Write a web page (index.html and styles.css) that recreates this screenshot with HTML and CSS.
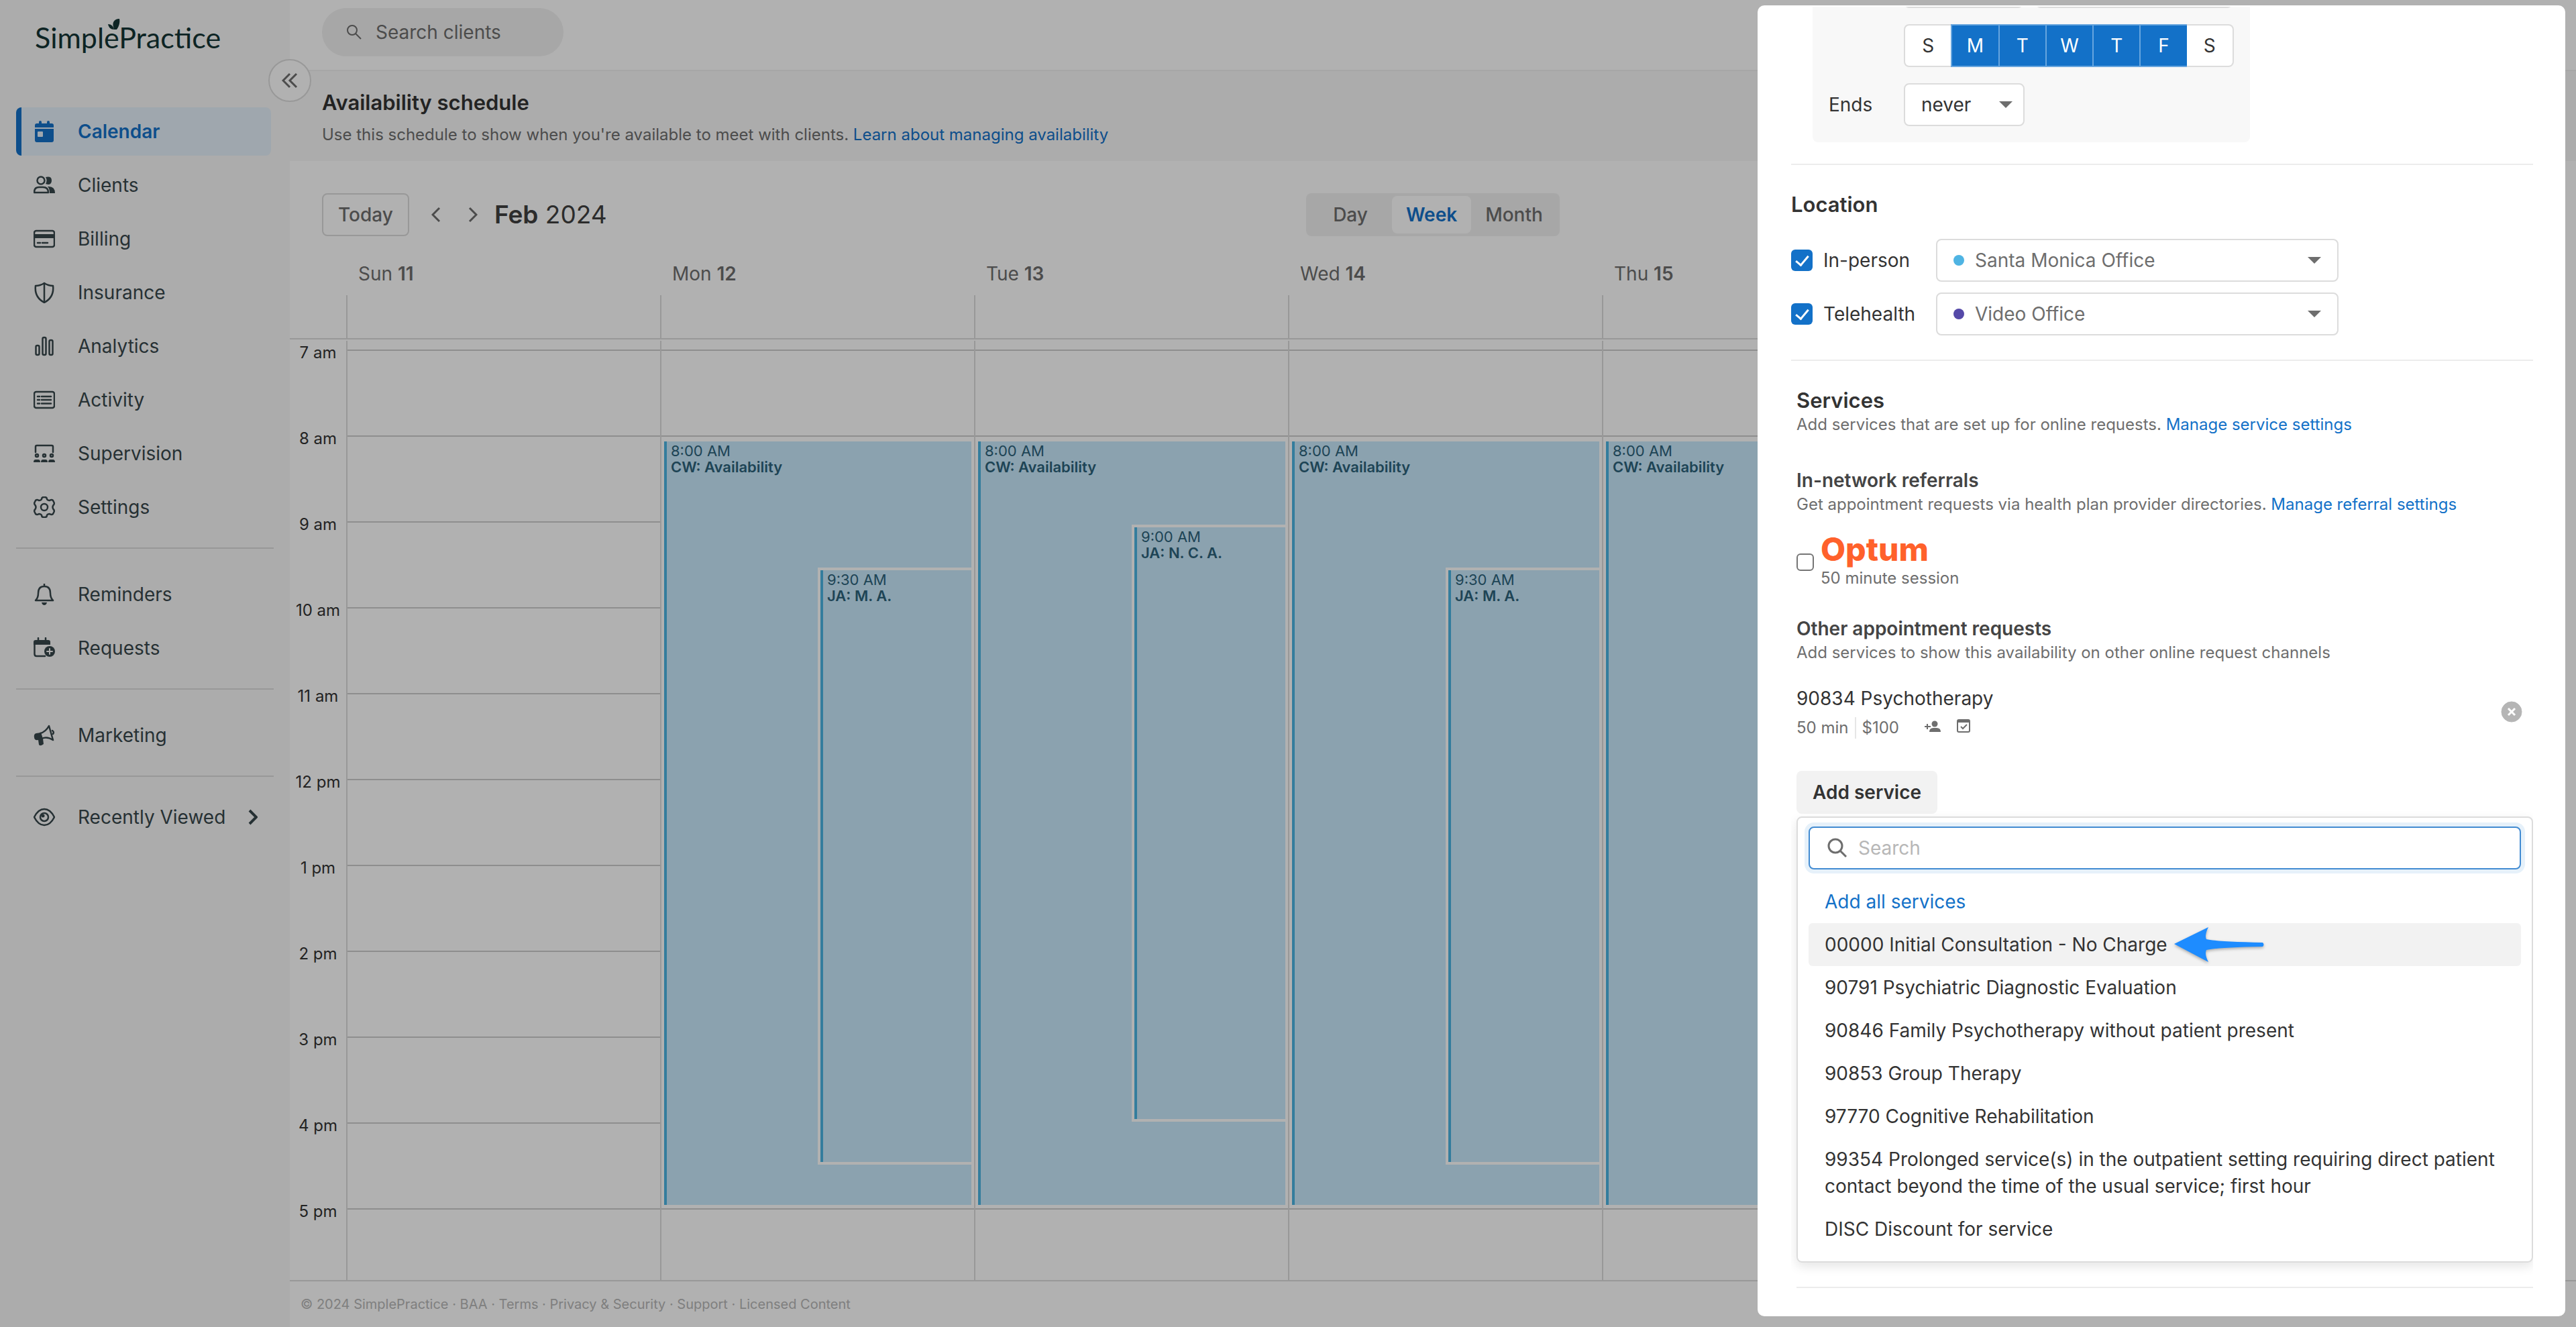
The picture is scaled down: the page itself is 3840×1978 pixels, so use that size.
FILE: index.html
```html
<!DOCTYPE html>
<html lang="en">
  <head>
    <meta charset="UTF-8" />
    <meta name="viewport" content="width=device-width, initial-scale=1.0" />
    <title>Availability schedule</title>
    <link rel="stylesheet" href="styles.css">
  </head>
  <body>
    <div class="app">
      <aside class="sidebar">
        <a class="logo" href="#">
          <span>SimplePractice</span>
          <svg class="logo-leaf" viewBox="0 0 18 18"><path d="M8 12C6 6 9 0 17 0c1 4 0 11-4 16H9z" /><path d="M0 8c5 0 8 3 9 8-5 0-8-3-9-8z" /></svg>
        </a>
        <button class="collapse" aria-label="Collapse menu">
          <svg viewBox="0 0 24 24"><path d="M12 2 2 12l10 10M22 2 12 12l10 10" /></svg>
        </button>

        <nav>
          <div class="nav-group">
            <a class="nav-item active" href="#">
              <svg class="icon solid" viewBox="0 0 32 32"><path d="M2 10V7q0-3 3-3h3V2q0-2 2-2t2 2v2h8V2q0-2 2-2t2 2v2h3q3 0 3 3v3zM2 12h28v17q0 3-3 3H5q-3 0-3-3zm5 4q-1 0-1 1v6q0 1 1 1h6q1 0 1-1v-6q0-1-1-1z" fill-rule="evenodd" /></svg>
              Calendar
            </a>
            <a class="nav-item" href="#">
              <svg class="icon" viewBox="0 0 32 32"><circle cx="11" cy="9" r="5.5" /><path d="M1 27q0-8 7-8h6q8 0 8 8z" /><path class="fill" d="M18 4q9-2 9 5 0 5-4 6-3 0-5-1 3-5 0-10zM21 18q11-1 11 10h-8q0-7-3-10z" /></svg>
              Clients
            </a>
            <a class="nav-item" href="#">
              <svg class="icon" viewBox="0 0 32 32"><rect x="1" y="4" width="30" height="24" rx="3" /><path class="fill" d="M1 9h30v6H1z" /><path d="M6 22h4M13 22h8" /></svg>
              Billing
            </a>
            <a class="nav-item" href="#">
              <svg class="icon" viewBox="0 0 32 32"><path d="M16 2q6 4 13 4 2 17-13 25Q1 23 3 6q7 0 13-4zM16 2v29" /></svg>
              Insurance
            </a>
            <a class="nav-item" href="#">
              <svg class="icon" viewBox="0 0 32 32"><rect x="3.5" y="15" width="5" height="14" rx="2" /><rect x="13.5" y="3" width="5" height="26" rx="2" /><rect x="23.5" y="7" width="5" height="22" rx="2" /></svg>
              Analytics
            </a>
            <a class="nav-item" href="#">
              <svg class="icon" viewBox="0 0 32 32"><rect x="1" y="4" width="30" height="24" rx="3" /><path d="M6 11h3M6 16h3M6 21.500h3M12 11h14M12 16h14M12 21.500h14" /></svg>
              Activity
            </a>
            <a class="nav-item" href="#">
              <svg class="icon" viewBox="0 0 32 32"><path d="M3 14V6q0-2 2-2h22q2 0 2 2v8" /><circle cx="5" cy="19" r="2" /><circle cx="16" cy="19" r="2" /><circle cx="27" cy="19" r="2" /><path class="fill" d="M0 29q0-4 3-4h4q3 0 3 4zM11 29q0-4 3-4h4q3 0 3 4zM22 29q0-4 3-4h4q3 0 3 4z" /></svg>
              Supervision
            </a>
            <a class="nav-item" href="#">
              <svg class="icon" viewBox="0 0 32 32"><circle cx="16" cy="16" r="5" /><path d="M12 4q0-3 3-3h2q3 0 3 3 1 2 4 2 3-2 5 0l1.500 3q1 2-1 4-2 3 0 6 2 2 1 4L29 26q-2 2-5 0-3 0-4 2 0 3-3 3h-2q-3 0-3-3-1-2-4-2-3 2-5 0l-1.500-3q-1-2 1-4 2-3 0-6-2-2-1-4L3 6q2-2 5 0 3 0 4-2z" /></svg>
              Settings
            </a>
          </div>
          <div class="nav-group">
            <a class="nav-item" href="#">
              <svg class="icon" viewBox="0 0 32 32"><path d="M3 25q4-4 4-11 0-10 9-10t9 10q0 7 4 11zM16 0v4" /><path class="fill" d="M12 28h8q-1 4-4 4t-4-4z" /></svg>
              Reminders
            </a>
            <a class="nav-item" href="#">
              <svg class="icon" viewBox="0 0 32 32"><path d="M7 1v5M18 1v5M1.500 8v17q0 3 3 3H17" /><path class="fill" d="M0 11V7q0-3 3-3h19q3 0 3 3v4z" /><circle class="fill" cx="24" cy="21" r="8" /><path class="cut" d="M24 17v8M20 21h8" /></svg>
              Requests
            </a>
          </div>
          <div class="nav-group">
            <a class="nav-item" href="#">
              <svg class="icon" viewBox="0 0 32 32"><path d="M10 13q8-2 13-11l6 21q-9-6-17-2zM28 9q3 2 1 5" /><path class="fill" d="M4 13l7-1 3 9 1 8q-5 4-7 1l-1-7Q1 24 1 19q-1-5 3-6z" /></svg>
              Marketing
            </a>
          </div>
          <div class="nav-group last">
            <a class="nav-item" href="#">
              <svg class="icon" viewBox="0 0 32 32"><path d="M1 16Q7 4 16 4t15 12q-6 12-15 12T1 16z" /><circle cx="16" cy="16" r="6" /><circle class="fill" cx="14" cy="14" r="2.500" /></svg>
              Recently Viewed
              <svg class="chevron" viewBox="0 0 14 24"><path d="M2 2l10 10L2 22" /></svg>
            </a>
          </div>
        </nav>
      </aside>

      <main class="main">
        <header class="topbar">
          <label class="client-search">
            <svg viewBox="0 0 24 24"><circle cx="9" cy="9" r="7" /><path d="m14 14 8 8" /></svg>
            <input type="text" placeholder="Search clients" aria-label="Search clients" />
          </label>
        </header>

        <section class="intro">
          <h1>Availability schedule</h1>
          <p>Use this schedule to show when you're available to meet with clients. <a href="#">Learn about managing availability</a></p>
        </section>

        <div class="toolbar">
          <div class="period">
            <button class="today">Today</button>
            <button class="step" aria-label="Previous week"><svg viewBox="0 0 14 24"><path d="M12 2 2 12l10 10" /></svg></button>
            <button class="step" aria-label="Next week"><svg viewBox="0 0 14 24"><path d="M2 2l10 10L2 22" /></svg></button>
            <h2><b>Feb</b> 2024</h2>
          </div>
          <div class="view-switch">
            <button>Day</button>
            <button class="active">Week</button>
            <button>Month</button>
          </div>
        </div>

        <div class="calendar">
          <div class="day-names">
            <div>Sun <b>11</b></div>
            <div>Mon <b>12</b></div>
            <div>Tue <b>13</b></div>
            <div>Wed <b>14</b></div>
            <div>Thu <b>15</b></div>
            <div></div>
            <div></div>
          </div>
          <div class="week">
            <div class="hours">
              <span>7 am</span>
              <span>8 am</span>
              <span>9 am</span>
              <span>10 am</span>
              <span>11 am</span>
              <span>12 pm</span>
              <span>1 pm</span>
              <span>2 pm</span>
              <span>3 pm</span>
              <span>4 pm</span>
              <span>5 pm</span>
            </div>
            <div class="day"></div>
            <div class="day">
              <div class="event all">8:00 AM<b>CW: Availability</b></div>
              <div class="event half-nine">9:30 AM<b>JA: M. A.</b></div>
            </div>
            <div class="day">
              <div class="event all">8:00 AM<b>CW: Availability</b></div>
              <div class="event nine">9:00 AM<b>JA: N. C. A.</b></div>
            </div>
            <div class="day">
              <div class="event all">8:00 AM<b>CW: Availability</b></div>
              <div class="event half-nine">9:30 AM<b>JA: M. A.</b></div>
            </div>
            <div class="day">
              <div class="event all">8:00 AM<b>CW: Availability</b></div>
            </div>
            <div class="day"></div>
            <div class="day"></div>
          </div>
        </div>

        <footer class="footer">© 2024 SimplePractice · <a href="#">BAA</a> · <a href="#">Terms</a> · <a href="#">Privacy &amp; Security</a> · <a href="#">Support</a> · <a href="#">Licensed Content</a></footer>
      </main>
    </div>

    <div class="overlay"></div>

    <div class="drawer" role="dialog" aria-label="Edit availability">
      <div class="drawer-body">
        <div class="repeat">
          <div class="repeat-every">
            <select class="every-count" aria-label="Repeat every"></select>
            <select class="every-unit" aria-label="Repeat unit"></select>
          </div>
          <div class="weekdays">
            <button>S</button>
            <button class="on">M</button>
            <button class="on">T</button>
            <button class="on">W</button>
            <button class="on">T</button>
            <button class="on">F</button>
            <button>S</button>
          </div>
          <div class="ends">
            <label for="ends">Ends</label>
            <span class="select-box never">
              <select id="ends"><option>never</option></select>
            </span>
          </div>
        </div>

        <section class="location">
          <h3>Location</h3>
          <div class="location-row">
            <input class="check" type="checkbox" id="in-person" checked />
            <label for="in-person">In-person</label>
            <span class="select-box office">
              <select aria-label="In-person office"><option>Santa Monica Office</option></select>
            </span>
          </div>
          <div class="location-row">
            <input class="check" type="checkbox" id="telehealth" checked />
            <label for="telehealth">Telehealth</label>
            <span class="select-box office video">
              <select aria-label="Telehealth office"><option>Video Office</option></select>
            </span>
          </div>
        </section>

        <section class="services">
          <h3>Services</h3>
          <p>Add services that are set up for online requests. <a href="#">Manage service settings</a></p>

          <h4>In-network referrals</h4>
          <p>Get appointment requests via health plan provider directories. <a href="#">Manage referral settings</a></p>
          <div class="referral">
            <input class="check small" type="checkbox" id="optum" />
            <label for="optum"><span class="optum">Optum</span>50 minute session</label>
          </div>

          <h4>Other appointment requests</h4>
          <p>Add services to show this availability on other online request channels</p>

          <div class="service">
            <div>
              <div class="service-name">90834 Psychotherapy</div>
              <div class="service-meta">
                <span>50 min</span>
                <span class="price">$100</span>
                <svg class="person" viewBox="0 0 24 18"><path d="M3 5h2v3h4v2H5v3H3v-3H0V8h3z" /><circle cx="15" cy="5" r="4.500" /><path d="M7 17q0-6 6-6h5q6 0 6 6z" /></svg>
                <svg class="booked" viewBox="0 0 20 20"><rect x="1" y="1" width="18" height="18" rx="2" /><path d="M1 3h18" stroke-width="4" /><path d="m6 11 3 3 6-6" /></svg>
              </div>
            </div>
            <button class="remove" aria-label="Remove service">
              <svg viewBox="0 0 32 32"><circle cx="16" cy="16" r="15" /><path d="m11 11 10 10M21 11 11 21" /></svg>
            </button>
          </div>

          <button class="add-service">Add service</button>
          <div class="service-menu">
            <label class="menu-search">
              <svg viewBox="0 0 30 30"><circle cx="12" cy="12" r="10" /><path d="m19 19 9 9" /></svg>
              <input type="text" placeholder="Search" aria-label="Search services" />
            </label>
            <button class="option add-all">Add all services</button>
            <button class="option hover">00000 Initial Consultation - No Charge
              <svg class="pointer" viewBox="0 0 134 54"><path d="M0 26 51 1q-6 12-3 18 18 4 84 5 3 3 0 6-66 1-84 5-3 6 3 18z" /></svg>
            </button>
            <button class="option">90791 Psychiatric Diagnostic Evaluation</button>
            <button class="option">90846 Family Psychotherapy without patient present</button>
            <button class="option">90853 Group Therapy</button>
            <button class="option">97770 Cognitive Rehabilitation</button>
            <button class="option">99354 Prolonged service(s) in the outpatient setting requiring direct patient contact beyond the time of the usual service; first hour</button>
            <button class="option">DISC Discount for service</button>
          </div>
        </section>
      </div>
    </div>
  </body>
</html>
```
FILE: styles.css
```css
* {
  box-sizing: border-box;
}

body {
  margin: 0;
  font-family: Inter, "Liberation Sans", sans-serif;
  font-size: 28px;
  line-height: 40px;
  color: #333;
  background: #fff;
}

a {
  color: #1371c8;
  text-decoration: none;
}

h1,
h2,
h3,
h4,
p {
  margin: 0;
}

b,
h1,
h3,
h4 {
  font-weight: 600;
}

button,
input,
select {
  font: inherit;
  color: inherit;
}

button {
  padding: 0;
  border: none;
  background: none;
  cursor: pointer;
}

svg {
  fill: none;
  stroke: currentColor;
  stroke-width: 2;
  flex-shrink: 0;
}

.app {
  display: flex;
  height: 100vh;
}

/* Sidebar */

.sidebar {
  position: relative;
  flex: 0 0 432px;
  background: #f8f8f8;
}

.logo {
  position: relative;
  display: block;
  height: 160px;
  padding: 28px 0 0 52px;
  font-family: Lato, sans-serif;
  font-size: 43px;
  line-height: 56px;
  color: #133535;
}

.logo-leaf {
  position: absolute;
  top: 28px;
  left: 161px;
  width: 18px;
  fill: currentColor;
  stroke: none;
}

.collapse {
  position: absolute;
  top: 88px;
  right: -32px;
  display: flex;
  align-items: center;
  justify-content: center;
  width: 64px;
  height: 64px;
  border: 2px solid #dcdcdc;
  border-radius: 50%;
  background: #fff;
  color: #6e6e6e;
}

.collapse svg {
  width: 24px;
  stroke-width: 3;
}

.nav-group {
  display: flex;
  flex-direction: column;
  gap: 8px;
  margin: 0 24px;
  padding-bottom: 24px;
  border-bottom: 2px solid #dcdcdc;
}

.nav-group + .nav-group {
  padding-top: 32px;
}

.nav-group.last {
  border: none;
}

.nav-group + .nav-group.last {
  padding-top: 24px;
}

.nav-item {
  display: flex;
  align-items: center;
  gap: 34px;
  height: 72px;
  margin-right: 4px;
  padding-left: 18px;
  border-left: 8px solid transparent;
  border-radius: 8px;
  color: #38474c;
}

.nav-item.active {
  border-color: #1371c8;
  background: #e6f1fb;
  color: #1371c8;
  font-weight: 600;
}

.icon {
  width: 32px;
  height: 32px;
  stroke-width: 2.5;
  stroke-linecap: round;
  stroke-linejoin: round;
}

.icon.solid,
.icon .fill {
  fill: currentColor;
  stroke: none;
}

.icon .cut {
  stroke: #f8f8f8;
  stroke-width: 2;
}

.chevron {
  width: 14px;
  stroke-width: 4;
}

/* Main */

.main {
  display: flex;
  flex: 1;
  flex-direction: column;
  min-width: 0;
}

.topbar {
  padding: 12px 48px 20px;
  border-bottom: 2px solid #f0f0f0;
}

.client-search {
  display: flex;
  align-items: center;
  gap: 20px;
  width: 360px;
  height: 72px;
  padding: 0 36px;
  border-radius: 36px;
  background: #f1f1f1;
  color: #6e6e6e;
}

.client-search svg {
  width: 24px;
}

.client-search input,
.menu-search input {
  flex: 1;
  min-width: 0;
  padding: 0;
  border: none;
  outline: none;
  background: none;
}

.client-search input::placeholder {
  color: #6e6e6e;
  opacity: 1;
}

.intro {
  padding: 27px 48px 23px;
  background: #f8f8f8;
}

.intro h1 {
  margin-bottom: 12px;
  font-size: 31px;
  line-height: 40px;
}

.intro p {
  font-size: 24px;
  line-height: 32px;
  color: #6e6e6e;
}

.toolbar {
  display: grid;
  grid-template-columns: 1fr auto 1fr;
  padding: 48px 48px 0;
}

.period {
  display: flex;
  align-items: center;
}

.today {
  height: 64px;
  margin-right: 24px;
  padding: 0 22px;
  border: 2px solid #dcdcdc;
  border-radius: 8px;
  font-weight: 500;
  color: #6e6e6e;
}

.step {
  display: flex;
  justify-content: center;
  width: 32px;
  margin-right: 23px;
  color: #6e6e6e;
}

.step + .step {
  margin-right: 16px;
}

.step svg {
  width: 14px;
  stroke-width: 3;
}

.period h2 {
  font-size: 37px;
  font-weight: 400;
  color: #404040;
}

.period h2 b {
  font-weight: 600;
}

.view-switch {
  display: flex;
  padding: 4px;
  border-radius: 8px;
  background: #f1f1f1;
}

.view-switch button {
  height: 56px;
  padding: 0 21px;
  border-radius: 8px;
  font-weight: 500;
  color: #6e6e6e;
}

.view-switch button:first-child {
  padding: 0 36px;
}

.view-switch button.active {
  background: #fff;
  color: #1371c8;
  font-weight: 600;
}

.calendar {
  display: flex;
  flex: 1;
  flex-direction: column;
  min-height: 0;
  padding-right: 48px;
  border-bottom: 2px solid #dcdcdc;
}

.day-names {
  display: grid;
  grid-template-columns: repeat(7, 1fr);
  padding: 36px 0 0 84px;
  border-bottom: 2px solid #dcdcdc;
  color: #6e6e6e;
}

.day-names div {
  padding-left: 18px;
}

.day-names div::after {
  content: "";
  display: block;
  height: 64px;
  margin: 12px 0 0 -18px;
  border-left: 2px solid #dcdcdc;
}

.day-names div:empty::after {
  margin-top: 52px;
}

.week {
  display: grid;
  grid-template-columns: 84px repeat(7, 1fr);
  flex: 1;
  min-height: 0;
  margin-top: 2px;
  overflow: hidden;
}

.hours {
  display: flex;
  flex-direction: column;
  font-size: 24px;
  line-height: 32px;
  text-align: center;
}

.hours span {
  flex: 0 0 128px;
}

.hours::before {
  content: "";
  flex: 0 0 2px;
}

/* one row per half hour, the first one starts at 7 am */
.day {
  display: grid;
  grid-template-columns: 1fr 1fr;
  grid-template-rows: repeat(22, 64px);
  padding-top: 14px;
  border-left: 2px solid #dcdcdc;
  background: linear-gradient(#cdcdcd 2px, transparent 2px) 0 13px / 100% 128px;
}

.event {
  margin: 4px 0 2px;
  padding: 2px 10px;
  border: 4px solid #fff;
  background: #c8e9fd;
  box-shadow: inset 4px 0 #4cb5e3;
  font-size: 22px;
  line-height: 24px;
  color: #2c637b;
}

.event b {
  display: block;
}

.event.all {
  grid-area: 3 / 1 / 21 / 3;
}

.event.half-nine {
  grid-area: 6 / 2 / 20 / 3;
}

.event.nine {
  grid-area: 5 / 2 / 19 / 3;
}

.footer {
  padding: 18px 16px;
  font-size: 20px;
  line-height: 32px;
  color: #b7b7b7;
}

.footer a {
  color: inherit;
}

.overlay {
  position: fixed;
  inset: 0;
  background: rgba(0, 0, 0, 0.305);
}

/* Drawer */

.drawer {
  position: fixed;
  top: 8px;
  right: 16px;
  bottom: 16px;
  width: 1204px;
  max-width: 100%;
  padding: 2px 48px 0 50px;
  border-radius: 10px;
  background: #fff;
}

.drawer-body {
  height: 100%;
  overflow: hidden;
}

.repeat {
  width: 652px;
  margin-left: 32px;
  padding: 0 24px 24px;
  border-radius: 0 0 8px 8px;
  background: #f8f8f8;
}

/* row is scrolled out, only its lower edge is left */
.repeat-every {
  display: flex;
  align-items: flex-end;
  gap: 18px;
  height: 2px;
  margin-left: 112px;
  overflow: hidden;
}

.repeat-every select,
.select-box select {
  height: 64px;
  border: 2px solid #dcdcdc;
  border-radius: 8px;
  background: #fff;
  appearance: none;
}

.every-count {
  width: 178px;
}

.every-unit {
  width: 294px;
}

.repeat-every select {
  flex-shrink: 0;
}

.weekdays {
  display: flex;
  width: 492px;
  margin: 24px 0 24px 112px;
}

.weekdays button {
  flex: 1;
  height: 64px;
  border: solid #dcdcdc;
  border-width: 2px 0;
  background: #fff;
}

.weekdays button:first-child {
  border-left-width: 2px;
  border-radius: 8px 0 0 8px;
}

.weekdays button:last-child {
  border-right-width: 2px;
  border-radius: 0 8px 8px 0;
}

.weekdays .on {
  border-color: #67a5de;
  border-left-width: 2px;
  background: #1371c8;
  color: #fff;
}

.ends {
  display: flex;
  align-items: center;
}

.ends label {
  width: 112px;
}

.select-box {
  position: relative;
  display: block;
}

.select-box::after {
  content: "";
  position: absolute;
  top: 27px;
  right: 26px;
  border: solid transparent;
  border-width: 10px 10px 0;
  border-top-color: #6e6e6e;
  pointer-events: none;
}

.select-box select {
  width: 100%;
  padding: 0 48px 0 24px;
}

.never {
  width: 180px;
}

.never::after {
  right: 18px;
}

.location,
.services {
  padding-top: 39px;
}

.location {
  margin-top: 32px;
  padding-bottom: 36px;
  border: solid #ececec;
  border-width: 2px 0;
}

h3 {
  font-size: 31px;
  line-height: 40px;
}

.location h3 {
  margin-bottom: 31px;
}

.location-row {
  display: flex;
  align-items: center;
}

.location-row + .location-row {
  margin-top: 16px;
}

.location-row label {
  width: 184px;
  padding-left: 16px;
}

.check {
  flex-shrink: 0;
  width: 32px;
  height: 32px;
  margin: 0;
  border: 2px solid #757575;
  border-radius: 6px;
  appearance: none;
}

.check:checked {
  display: grid;
  place-items: center;
  border: none;
  background: #1371c8;
}

.check:checked::after {
  content: "";
  width: 8px;
  height: 16px;
  margin-bottom: 4px;
  border: solid #fff;
  border-width: 0 3px 3px 0;
  transform: rotate(40deg);
}

.check.small {
  width: 26px;
  height: 26px;
  margin-top: 6px;
}

.office {
  width: 600px;
}

.office select {
  padding-left: 56px;
  color: #6e6e6e;
}

.office::before {
  content: "";
  position: absolute;
  top: 24px;
  left: 26px;
  width: 16px;
  height: 16px;
  border-radius: 50%;
  background: #4fb4e3;
}

.office.video::before {
  background: #5549a8;
}

.services {
  margin: 0 0 0 8px;
  padding-bottom: 36px;
  border-bottom: 2px solid #ececec;
}

.services p {
  font-size: 24px;
  line-height: 32px;
  color: #6e6e6e;
}

h4 {
  margin: 49px 0 2px;
  font-size: 28px;
  line-height: 36px;
  color: #444;
}

.referral {
  display: flex;
  align-items: center;
  gap: 10px;
  margin-top: 24px;
  margin-bottom: -8px;
}

.referral label {
  font-size: 24px;
  line-height: 32px;
  color: #6e6e6e;
}

.optum {
  display: block;
  font-size: 48px;
  font-weight: 800;
  line-height: 54px;
  color: #ff612b;
}

.service {
  display: flex;
  align-items: center;
  justify-content: space-between;
  margin-top: 32px;
  padding-right: 16px;
}

.service-meta {
  display: flex;
  align-items: center;
  margin-top: 8px;
  font-size: 24px;
  line-height: 32px;
  color: #6e6e6e;
}

.price {
  margin-left: 9px;
  padding-left: 9px;
  border-left: 2px solid #e6e6e6;
}

.person {
  width: 24px;
  margin: 0 24px 4px 38px;
  fill: currentColor;
  stroke: none;
}

.booked {
  width: 20px;
  margin-bottom: 6px;
}

.remove svg {
  display: block;
  width: 32px;
  fill: #b5b5b5;
  stroke: #fff;
  stroke-width: 3;
}

.remove circle {
  stroke: #b5b5b5;
  stroke-width: 1;
}

.add-service {
  display: block;
  height: 64px;
  margin-top: 48px;
  padding: 0 24px;
  border-radius: 8px;
  background: #f2f2f2;
  font-weight: 600;
}

.service-menu {
  margin-top: 4px;
  padding: 13px 16px 16px;
  border: 2px solid #dcdcdc;
  border-radius: 8px;
  box-shadow: 0 6px 16px rgba(0, 0, 0, 0.1);
}

.menu-search {
  display: flex;
  align-items: center;
  gap: 16px;
  height: 64px;
  margin-bottom: 16px;
  padding: 0 26px;
  border: 2px solid #428bd2;
  border-radius: 8px;
  box-shadow: 0 0 0 6px #e6f1fa;
}

.menu-search svg {
  width: 30px;
  stroke: #6e6e6e;
  stroke-width: 3;
}

.menu-search input::placeholder {
  color: #b7b7b7;
  opacity: 1;
}

.option {
  display: flex;
  align-items: center;
  width: 100%;
  min-height: 64px;
  padding: 12px 24px;
  border-radius: 6px;
  text-align: left;
}

.option.add-all {
  color: #1371c8;
}

.option.hover {
  padding: 5px 24px;
  background: #f2f2f2;
}

.pointer {
  width: 134px;
  margin-left: 10px;
  fill: #1e8cff;
  stroke: none;
  filter: drop-shadow(0 2px 2px rgba(0, 0, 0, 0.3));
}
```
